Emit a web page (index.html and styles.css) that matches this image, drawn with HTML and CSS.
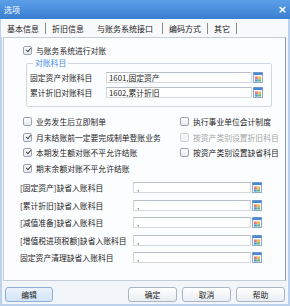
FILE: index.html
```html
<!DOCTYPE html>
<html lang="zh-CN">
<head>
    <meta charset="UTF-8">
    <title>选项</title>
    <link rel="stylesheet" href="styles.css">
</head>
<body>
    <svg class="defs" width="0" height="0">
        <symbol id="ref" viewBox="0 0 10 11">
            <rect x="0.5" y="0.5" width="9" height="10" fill="#f3f6fa" stroke="#8fa9c8"/>
            <rect x="0.5" y="0.5" width="9" height="2.5" fill="#4c88d2"/>
            <rect x="2" y="4.5" width="2.8" height="2.5" fill="#e97b74"/>
            <rect x="5.2" y="4.5" width="2.8" height="2.5" fill="#f0b64a"/>
            <rect x="2" y="7.3" width="2.8" height="2.3" fill="#4f93d8"/>
            <rect x="5.2" y="7.3" width="2.8" height="2.3" fill="#67b86a"/>
        </symbol>
    </svg>

    <div class="window">
        <div class="titlebar">
            <span class="title">选项</span>
            <span class="close">×</span>
        </div>
        <div class="frame">
            <div class="tabs">
                <span class="tab">基本信息</span>
                <span class="tab no-sep">折旧信息</span>
                <span class="tab active">与账务系统接口</span>
                <span class="tab">编码方式</span>
                <span class="tab">其它</span>
            </div>

            <div class="panel">
                <label class="check main-check"><span class="box checked"></span>与账务系统进行对账</label>

                <fieldset class="group">
                    <legend>对账科目</legend>
                    <div class="field-row">
                        <span class="label">固定资产对账科目</span>
                        <span class="input">1601,固定资产</span>
                        <svg class="ref"><use href="#ref"/></svg>
                    </div>
                    <div class="field-row">
                        <span class="label">累计折旧对账科目</span>
                        <span class="input">1602,累计折旧</span>
                        <svg class="ref"><use href="#ref"/></svg>
                    </div>
                </fieldset>

                <div class="options">
                    <label class="check"><span class="box"></span>业务发生后立即制单</label>
                    <label class="check"><span class="box"></span>执行事业单位会计制度</label>
                    <label class="check"><span class="box checked"></span>月末结账前一定要完成制单登账业务</label>
                    <label class="check disabled"><span class="box"></span>按资产类别设置折旧科目</label>
                    <label class="check"><span class="box checked"></span>本期发生额对账不平允许结账</label>
                    <label class="check"><span class="box"></span>按资产类别设置缺省科目</label>
                    <label class="check"><span class="box checked"></span>期末余额对账不平允许结账</label>
                </div>

                <div class="accounts">
                    <div class="field-row">
                        <span class="label">[固定资产]缺省入账科目</span>
                        <span class="input">,</span>
                        <svg class="ref"><use href="#ref"/></svg>
                    </div>
                    <div class="field-row">
                        <span class="label">[累计折旧]缺省入账科目</span>
                        <span class="input">,</span>
                        <svg class="ref"><use href="#ref"/></svg>
                    </div>
                    <div class="field-row">
                        <span class="label">[减值准备]缺省入账科目</span>
                        <span class="input">,</span>
                        <svg class="ref"><use href="#ref"/></svg>
                    </div>
                    <div class="field-row">
                        <span class="label">[增值税进项税额]缺省入账科目</span>
                        <span class="input">,</span>
                        <svg class="ref"><use href="#ref"/></svg>
                    </div>
                    <div class="field-row">
                        <span class="label">固定资产清理缺省入账科目</span>
                        <span class="input">,</span>
                        <svg class="ref"><use href="#ref"/></svg>
                    </div>
                </div>
            </div>

            <div class="footer">
                <button class="btn edit">编辑</button>
                <span class="spacer"></span>
                <button class="btn">确定</button>
                <button class="btn">取消</button>
                <button class="btn">帮助</button>
            </div>
        </div>
    </div>
</body>
</html>
```

FILE: styles.css
```css
body {
    margin: 0;
    font-family: "Noto Sans CJK SC", sans-serif;
    font-size: 7.8px;
    color: #1e1e1e;
}
.defs {
    position: absolute;
}
.window {
    width: 290px;
    height: 306px;
    display: flex;
    flex-direction: column;
}
.titlebar {
    height: 19px;
    flex-shrink: 0;
    background: linear-gradient(#5c9fe8, #3a7ed2);
    color: white;
    display: flex;
    align-items: center;
    justify-content: space-between;
    padding: 0 3px 0 4px;
}
.title {
    font-size: 8px;
}
.close {
    font-size: 11px;
    font-weight: bold;
    font-family: "DejaVu Sans", sans-serif;
    line-height: 1;
}
.frame {
    flex: 1;
    display: flex;
    flex-direction: column;
    background: #f2f5f9;
    border: 2px solid #bcd3ee;
    border-top: 0;
}
.tabs {
    height: 18px;
    display: flex;
    align-items: center;
    background: #f8f9fb;
    margin-left: -1px;
    font-size: 8px;
}
.tab {
    padding: 0 6px;
    line-height: 11px;
    border-right: 1px solid #8c8c8c;
    color: #222;
}
.tab.no-sep {
    border-right-color: transparent;
}
.tab.active {
    padding: 0 9px 0 6px;
}
.panel {
    height: 242px;
    margin: 0 2px 0 1px;
    background: #fcfdfe;
    border: 1px solid #c4ccd6;
    border-right-color: #8f98a3;
}
.check {
    display: flex;
    align-items: center;
    white-space: nowrap;
}
.box {
    position: relative;
    width: 7px;
    height: 7px;
    margin-right: 4px;
    border: 1px solid #98a3af;
    border-radius: 2px;
    background: linear-gradient(#ffffff, #e6eaef);
    flex-shrink: 0;
}
.box.checked::after {
    content: '';
    position: absolute;
    left: 1.5px;
    top: 1px;
    width: 3.5px;
    height: 1.8px;
    border-left: 1.2px solid #4a4a4a;
    border-bottom: 1.2px solid #4a4a4a;
    transform: rotate(-48deg);
}
.check.disabled {
    color: #a6a6a6;
}
.check.disabled .box {
    border-color: #cdd3d9;
    background: #f4f6f8;
}
.main-check {
    height: 14px;
    margin-top: 5px;
    padding-left: 19px;
}
.group {
    margin: 0 0 0 22px;
    width: 246px;
    box-sizing: border-box;
    padding: 1px 0 6px 3px;
    border: 1px solid #cfd7e0;
    border-radius: 2px;
}
.group legend {
    padding: 0 2px;
    margin-left: 3px;
    line-height: 12px;
    color: #4a8de0;
}
.field-row {
    display: flex;
    align-items: center;
    height: 15px;
}
.group .label {
    width: 76px;
}
.input {
    box-sizing: border-box;
    height: 11px;
    line-height: 9px;
    padding-left: 2px;
    background: #fefefe;
    border: 1px solid #d4d8dd;
    border-top-color: #b9bfc6;
    white-space: nowrap;
    overflow: hidden;
}
.group .input {
    width: 146px;
}
.ref {
    width: 10px;
    height: 11px;
    margin-left: 1px;
}
.options {
    display: grid;
    grid-template-columns: 157px 1fr;
    grid-auto-rows: 15.5px;
    margin-top: 7px;
    padding-left: 19px;
}
.accounts {
    margin-top: 3px;
    padding-left: 16px;
}
.accounts .field-row {
    height: 17.5px;
}
.accounts .label {
    width: 113px;
    white-space: nowrap;
}
.accounts .input {
    width: 118px;
    color: #666;
    padding-left: 3px;
}
.footer {
    display: flex;
    align-items: flex-start;
    gap: 5px;
    padding: 6px 3px 0 3px;
}
.spacer {
    flex: 1;
}
.btn {
    width: 49px;
    height: 15px;
    padding: 0;
    font-family: inherit;
    font-size: 7.8px;
    color: #222;
    background: linear-gradient(#ffffff, #e9edf2);
    border: 1px solid #aab5c2;
    border-radius: 3px;
}
.btn.edit {
    width: 48px;
    background: linear-gradient(#eaf2fc, #d3e3f6);
    border-color: #8fb0d8;
}
```
